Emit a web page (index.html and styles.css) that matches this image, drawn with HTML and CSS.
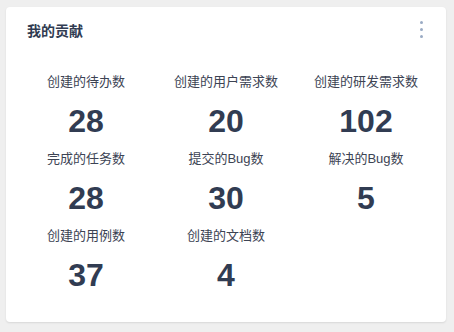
FILE: index.html
```html
<!DOCTYPE html>
<html lang="zh-CN">
<head>
    <meta charset="UTF-8">
    <meta name="viewport" content="width=device-width, initial-scale=1.0">
    <title>我的贡献</title>
    <link rel="stylesheet" href="styles.css">
</head>
<body>
    <div class="card">
        <div class="card-header">
            <h2 class="card-title">我的贡献</h2>
            <span class="more"><i></i><i></i><i></i></span>
        </div>
        <div class="stats">
            <div class="stat">
                <div class="stat-label">创建的待办数</div>
                <div class="stat-value">28</div>
            </div>
            <div class="stat">
                <div class="stat-label">创建的用户需求数</div>
                <div class="stat-value">20</div>
            </div>
            <div class="stat">
                <div class="stat-label">创建的研发需求数</div>
                <div class="stat-value">102</div>
            </div>
            <div class="stat">
                <div class="stat-label">完成的任务数</div>
                <div class="stat-value">28</div>
            </div>
            <div class="stat">
                <div class="stat-label">提交的Bug数</div>
                <div class="stat-value">30</div>
            </div>
            <div class="stat">
                <div class="stat-label">解决的Bug数</div>
                <div class="stat-value">5</div>
            </div>
            <div class="stat">
                <div class="stat-label">创建的用例数</div>
                <div class="stat-value">37</div>
            </div>
            <div class="stat">
                <div class="stat-label">创建的文档数</div>
                <div class="stat-value">4</div>
            </div>
        </div>
    </div>
</body>
</html>
```

FILE: styles.css
```css
body {
    margin: 0;
    padding: 7px 8px 10px 6px;
    background: #efefef;
    font-family: "Liberation Sans", Arial, "Noto Sans CJK SC", sans-serif;
    color: #3c4353;
}

.card {
    width: 440px;
    height: 315px;
    box-sizing: border-box;
    background: #fff;
    border-radius: 4px;
    box-shadow: 0 1px 2px rgba(0, 0, 0, 0.1);
}

.card-header {
    display: flex;
    justify-content: space-between;
    align-items: center;
    padding: 14px 23px 0 21px;
}

.card-title {
    margin: 0;
    font-size: 14px;
    line-height: 20px;
    font-weight: bold;
    color: #313c52;
}

.more {
    display: flex;
    flex-direction: column;
    gap: 4px;
    margin-top: -4px;
}

.more i {
    display: block;
    width: 3px;
    height: 3px;
    border-radius: 50%;
    background: #9aabc4;
}

.stats {
    display: grid;
    grid-template-columns: repeat(3, 140px);
    row-gap: 6px;
    padding: 31px 10px 0;
}

.stat {
    text-align: center;
}

.stat-label {
    font-size: 13px;
    line-height: 20px;
    color: #3c4353;
}

.stat-value {
    margin-top: 8px;
    font-size: 32px;
    line-height: 43px;
    font-weight: bold;
    color: #313c52;
}
```
